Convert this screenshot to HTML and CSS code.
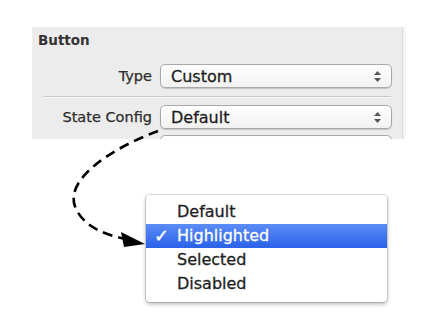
FILE: index.html
```html
<!DOCTYPE html>
<html lang="en">
<head>
    <meta charset="UTF-8">
    <title>Button State Config</title>
    <link rel="stylesheet" href="styles.css">
</head>
<body>

    <div class="page">
        <!-- attributes inspector panel -->
        <div class="panel">
            <div class="panel-title">Button</div>

            <div class="field-row">
                <span class="field-label">Type</span>
                <div class="select">
                    <span>Custom</span>
                    <svg class="stepper" width="7" height="11" viewBox="0 0 7 11"><path d="M3.5 0 L7 4 L0 4 Z M0 7 L7 7 L3.5 11 Z" fill="#555"/></svg>
                </div>
            </div>

            <div class="separator"></div>

            <div class="field-row">
                <span class="field-label">State Config</span>
                <div class="select">
                    <span>Default</span>
                    <svg class="stepper" width="7" height="11" viewBox="0 0 7 11"><path d="M3.5 0 L7 4 L0 4 Z M0 7 L7 7 L3.5 11 Z" fill="#555"/></svg>
                </div>
            </div>

            <div class="field-row">
                <span class="field-label"></span>
                <div class="select"></div>
            </div>
        </div>

        <!-- popup menu shown for State Config -->
        <ul class="menu">
            <li>Default</li>
            <li class="checked">Highlighted</li>
            <li>Selected</li>
            <li>Disabled</li>
        </ul>

        <!-- dashed arrow from the popup button to the menu -->
        <svg class="callout" width="427" height="332" viewBox="0 0 427 332">
            <path d="M158 131 C 112 148, 62 180, 76 209 C 85 227, 105 235, 126 239" fill="none" stroke="#000" stroke-width="2.6" stroke-dasharray="10 6"/>
            <polygon points="145,244 121,232 124,247" fill="#000"/>
        </svg>
    </div>

</body>
</html>
```

FILE: styles.css
```css
/* --- page --- */
body {
    margin: 0;
    background-color: #ffffff;
    font-family: "DejaVu Sans", "Liberation Sans", sans-serif;
    color: #222;
}

.page {
    position: relative;
    width: 427px;
    height: 332px;
    padding-top: 27px;
    box-sizing: border-box;
}

/* --- inspector panel --- */
.panel {
    margin-left: 32px;
    width: 371px;
    height: 112px;
    overflow: hidden;
    background-color: #ececec;
    border-right: 1px solid #dadada;
    box-shadow: 3px 0 0 #f5f5f5;
    padding-top: 5px;
    box-sizing: border-box;
}

.panel-title {
    padding-left: 6px;
    font-size: 13.5px;
    font-weight: 700;
    line-height: 16px;
    color: #333;
    margin-bottom: 16px;
}

.field-row {
    display: flex;
    align-items: center;
}

.field-label {
    width: 128px;
    padding-right: 8px;
    box-sizing: border-box;
    text-align: right;
    font-size: 14.5px;
    color: #2e2e2e;
    -webkit-text-stroke: 0.25px #2e2e2e;
}

.select {
    width: 232px;
    height: 24px;
    box-sizing: border-box;
    display: flex;
    align-items: center;
    justify-content: space-between;
    padding: 0 10px 0 10px;
    border: 1px solid #a9a9a9;
    border-radius: 5px;
    background: linear-gradient(#ffffff, #f1f1f1);
    box-shadow: 0 1px 1px rgba(0,0,0,0.18);
    font-size: 16px;
    color: #1e1e1e;
    -webkit-text-stroke: 0.3px #1e1e1e;
}

.field-row + .field-row {
    margin-top: 6px;
}

.separator {
    margin: 8px 11px 8px 11px;
    height: 1px;
    background-color: #c9c9c9;
    box-shadow: 0 1px 0 #f8f8f8;
}

/* --- popup menu --- */
.menu {
    list-style: none;
    margin: 56px 0 0 146px;
    padding: 5px 0 6px 0;
    width: 241px;
    background-color: #ffffff;
    border-radius: 4px;
    box-shadow: 0 0 0 1px rgba(0,0,0,0.12), 0 2px 4px rgba(0,0,0,0.3);
}

.menu li {
    height: 24px;
    line-height: 24px;
    padding-left: 31px;
    font-size: 16px;
    color: #1e1e1e;
    -webkit-text-stroke: 0.3px #1e1e1e;
    position: relative;
}

.menu li.checked {
    background: linear-gradient(#5b8cf6, #2a62e9);
    color: #ffffff;
    -webkit-text-stroke: 0.3px #ffffff;
}

.menu li.checked::before {
    content: "\2713";
    position: absolute;
    left: 8px;
    top: 0;
    font-size: 18px;
    font-weight: 700;
}

/* --- arrow overlay --- */
.callout {
    position: absolute;
    left: 0;
    top: 0;
    pointer-events: none;
}
```
